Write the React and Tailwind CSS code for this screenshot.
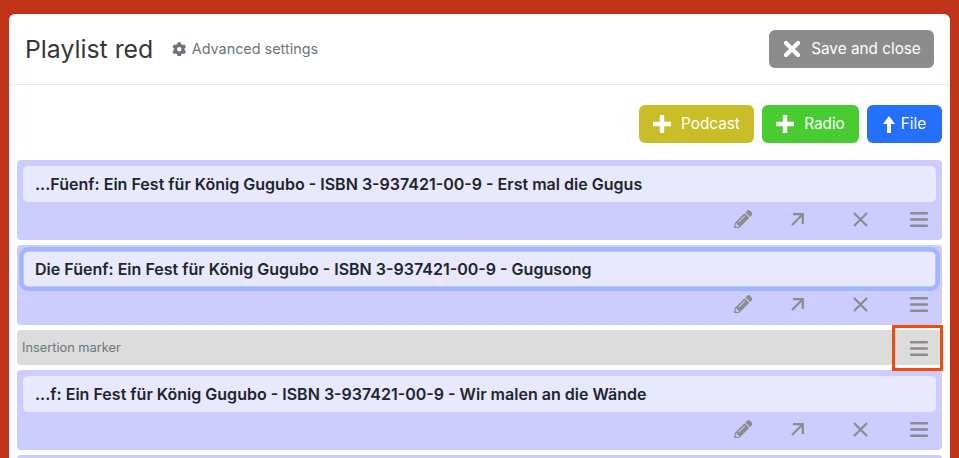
import { FaCog, FaPencilAlt } from 'react-icons/fa';

const ITEMS = [
  { title: '...Füenf: Ein Fest für König Gugubo - ISBN 3-937421-00-9 - Erst mal die Gugus' },
  { title: 'Die Füenf: Ein Fest für König Gugubo - ISBN 3-937421-00-9 - Gugusong', focused: true },
  { marker: true },
  { title: '...f: Ein Fest für König Gugubo - ISBN 3-937421-00-9 - Wir malen an die Wände' },
];

function Bars() {
  return (
    <svg width="18" height="15" viewBox="0 0 18 15" className="block text-[#8c8c8c]">
      <path d="M1 1.3h16M1 7.5h16M1 13.7h16" stroke="currentColor" strokeWidth="2.4" strokeLinecap="round" fill="none" />
    </svg>
  );
}

function ArrowOut() {
  return (
    <svg width="13" height="13" viewBox="0 0 13 13" className="block text-[#8c8c8c]">
      <path d="M1 12L11.5 1.5M2 1.2h9.8v9.8" stroke="currentColor" strokeWidth="2.2" fill="none" />
    </svg>
  );
}

function Cross() {
  return (
    <svg width="15" height="15" viewBox="0 0 15 15" className="block text-[#8c8c8c]">
      <path d="M1 1l13 13M14 1L1 14" stroke="currentColor" strokeWidth="2.2" fill="none" />
    </svg>
  );
}

function PlusIcon() {
  return (
    <svg width="18" height="18" viewBox="0 0 18 18" className="mr-[10px] block">
      <path d="M9 0v18M0 9h18" stroke="currentColor" strokeWidth="4.4" fill="none" />
    </svg>
  );
}

function CloseIcon() {
  return (
    <svg width="16" height="16" viewBox="0 0 16 16" className="mr-[11px] block">
      <path d="M2 2l12 12M14 2L2 14" stroke="currentColor" strokeWidth="4.2" strokeLinecap="square" fill="none" />
    </svg>
  );
}

function UpIcon() {
  return (
    <svg width="12" height="17" viewBox="0 0 12 17" className="mr-[6px] block">
      <path d="M6 0L12 8H8V17H4V8H0Z" fill="currentColor" />
    </svg>
  );
}

function ActionButton({ color, icon, label, className }) {
  return (
    <button className={`flex h-[38px] items-center justify-center rounded-[6px] text-[15.3px] text-white ${color} ${className}`}>
      {icon}
      <span className="pt-px">{label}</span>
    </button>
  );
}

function PlaylistItem({ title, focused }) {
  return (
    <div className="flex h-20 flex-col rounded-[4px] bg-[#ccccff] px-1.5 pt-1.5">
      <div
        className={`flex h-9 shrink-0 items-center rounded-[5px] bg-[#e8e8ff] pl-3 text-[16.05px] font-semibold text-[#212529] ${
          focused ? 'border border-[#b8c5fe] shadow-[0_0_0_4px_#a3b6fd] pl-[11px]' : ''
        }`}
      >
        {title}
      </div>
      <div className="flex h-[34px] items-center justify-end pr-2">
        <FaPencilAlt className="text-[18.5px] text-[#8c8c8c]" />
        <span className="ml-[39px]"><ArrowOut /></span>
        <span className="ml-[49px]"><Cross /></span>
        <span className="ml-[42px]"><Bars /></span>
      </div>
    </div>
  );
}

function InsertionMarker() {
  return (
    <div className="relative flex h-[35px] items-center rounded-[4px] bg-[#dcdcdc] pl-[5px] text-[12.8px] text-[#6c757d]">
      <span className="pt-px">Insertion marker</span>
      <span className="ml-auto mr-[14px] mt-0.5"><Bars /></span>
      <div className="absolute -top-[5px] -right-px h-[46px] w-[51px] border-[3px] border-[#f24a0c]" />
    </div>
  );
}

export default function App() {
  return (
    <div className="h-[458px] overflow-hidden bg-[#bf3418] px-[9px] pt-[14px] font-['Inter',sans-serif]">
      <div className="h-[500px] rounded-[6px] bg-white">
        {/* Header */}
        <div className="flex h-[71px] items-center border-b border-[#e5e5ec] px-4">
          <h1 className="text-[24.8px] leading-none text-[#373737]">Playlist red</h1>
          <div className="ml-[19px] flex items-center text-[14.4px] text-[#6c757d]">
            <FaCog className="mr-[5px] text-[14.5px]" />
            Advanced settings
          </div>
          <ActionButton
            color="bg-[#8c8c8c] pl-0.5"
            className="ml-auto w-[165px]"
            icon={<CloseIcon />}
            label="Save and close"
          />
        </div>

        {/* Add buttons */}
        <div className="flex justify-end gap-2 pr-2 pt-5">
          <ActionButton color="bg-[#c9bd28]" className="w-[115px]" icon={<PlusIcon />} label="Podcast" />
          <ActionButton color="bg-[#48cc32]" className="w-[97px]" icon={<PlusIcon />} label="Radio" />
          <ActionButton color="bg-[#2470fb]" className="w-[75px]" icon={<UpIcon />} label="File" />
        </div>

        {/* Playlist */}
        <div className="mt-[17px] flex flex-col gap-[5px] px-2">
          {ITEMS.map((item, i) =>
            item.marker ? <InsertionMarker key={i} /> : <PlaylistItem key={i} title={item.title} focused={item.focused} />
          )}
          <div className="h-20 rounded-[4px] bg-[#ccccff]" />
        </div>
      </div>
    </div>
  );
}
